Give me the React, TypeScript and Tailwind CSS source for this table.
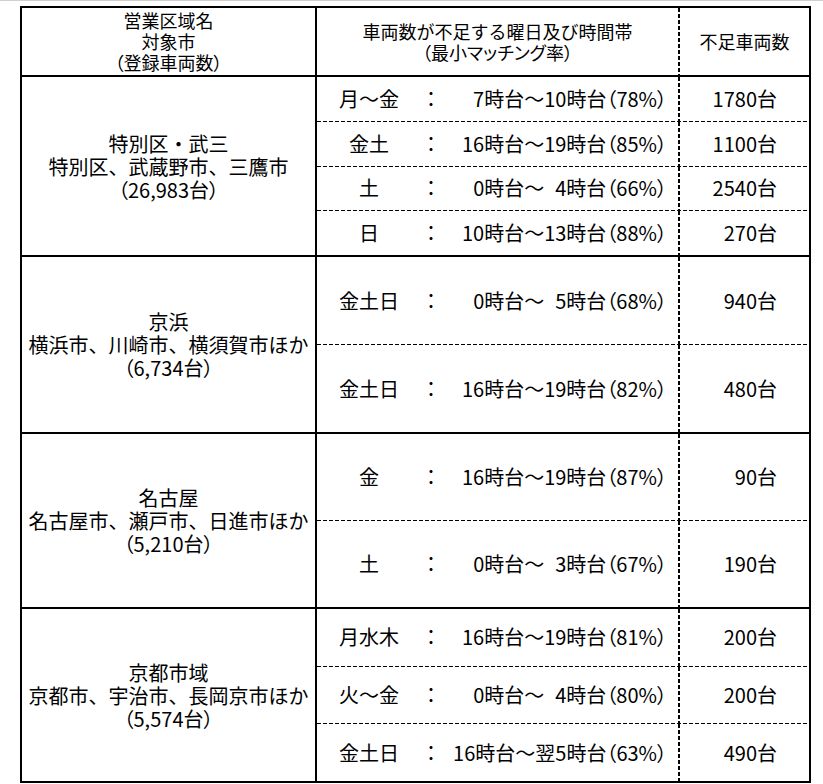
import React from "react";

type Row = { day: string; time: string; n: string };
type Group = { h: string; title: string; cities: string; count: string; rows: Row[] };

const groups: Group[] = [
  {
    h: "h-[180px]",
    title: "特別区・武三",
    cities: "特別区、武蔵野市、三鷹市",
    count: "（26,983台）",
    rows: [
      { day: "月～金", time: "7時台～10時台（78%）", n: "1780台" },
      { day: "金土", time: "16時台～19時台（85%）", n: "1100台" },
      { day: "土", time: "0時台～_4時台（66%）", n: "2540台" },
      { day: "日", time: "10時台～13時台（88%）", n: "270台" },
    ],
  },
  {
    h: "h-[177px]",
    title: "京浜",
    cities: "横浜市、川崎市、横須賀市ほか",
    count: "（6,734台）",
    rows: [
      { day: "金土日", time: "0時台～_5時台（68%）", n: "940台" },
      { day: "金土日", time: "16時台～19時台（82%）", n: "480台" },
    ],
  },
  {
    h: "h-[175px]",
    title: "名古屋",
    cities: "名古屋市、瀬戸市、日進市ほか",
    count: "（5,210台）",
    rows: [
      { day: "金", time: "16時台～19時台（87%）", n: "90台" },
      { day: "土", time: "0時台～_3時台（67%）", n: "190台" },
    ],
  },
  {
    h: "h-[172px]",
    title: "京都市域",
    cities: "京都市、宇治市、長岡京市ほか",
    count: "（5,574台）",
    rows: [
      { day: "月水木", time: "16時台～19時台（81%）", n: "200台" },
      { day: "火～金", time: "0時台～_4時台（80%）", n: "200台" },
      { day: "金土日", time: "16時台～翌5時台（63%）", n: "490台" },
    ],
  },
];

function VDash() {
  return (
    <div className="w-[2px] shrink-0 self-stretch bg-[repeating-linear-gradient(to_bottom,#000_0_4px,transparent_4px_6px)]" />
  );
}

function HDash() {
  return (
    <div className="h-px w-full shrink-0 bg-[repeating-linear-gradient(to_right,#000_0_4px,transparent_4px_6px)]" />
  );
}

function Time({ t }: { t: string }) {
  const parts = t.split("_");
  return (
    <span className="[font-feature-settings:'palt']">
      {parts.map((p, i) => (
        <React.Fragment key={i}>
          {i > 0 && <span className="inline-block w-[11px]" />}
          {p}
        </React.Fragment>
      ))}
    </span>
  );
}

export default function App() {
  return (
    <div className="min-h-[784px] w-full bg-white font-['Noto_Sans_CJK_JP','Noto_Sans_CJK_SC',sans-serif] text-black">
      <div className="h-px w-full bg-[#cfcfcf]" />
      <div className="ml-[20px] mt-[5px] w-[791px] border-2 border-black">
        {/* header */}
        <div className="flex h-[69px] border-b-2 border-black text-[18px] leading-[21px]">
          <div className="flex w-[295px] shrink-0 flex-col items-center justify-center border-r-2 border-black text-center">
            <div>営業区域名</div>
            <div>対象市</div>
            <div className="[font-feature-settings:'palt']">（登録車両数）</div>
          </div>
          <div className="flex w-[361px] shrink-0 flex-col items-center justify-center text-center">
            <div>車両数が不足する曜日及び時間帯</div>
            <div className="[font-feature-settings:'palt']">（最小マッチング率）</div>
          </div>
          <VDash />
          <div className="flex flex-1 items-center justify-center">不足車両数</div>
        </div>
        {groups.map((g, gi) => (
          <div
            key={gi}
            className={`flex ${g.h} ${gi < groups.length - 1 ? "border-b-2 border-black" : ""}`}
          >
            <div className="flex w-[295px] shrink-0 flex-col items-center justify-center border-r-2 border-black text-center text-[20px] leading-[23px]">
              <div>{g.title}</div>
              <div>{g.cities}</div>
              <div className="[font-feature-settings:'palt']">{g.count}</div>
            </div>
            <div className="flex flex-1 flex-col">
              {g.rows.map((r, ri) => (
                <React.Fragment key={ri}>
                  {ri > 0 && <HDash />}
                  <div className="flex flex-1 text-[20px] leading-[24px]">
                    <div className="flex w-[361px] shrink-0 items-center">
                      <div className="w-[104px] shrink-0 text-center">{r.day}</div>
                      <div className="w-[20px] shrink-0 text-center">：</div>
                      <div className="flex-1 pr-[11px] text-right">
                        <Time t={r.time} />
                      </div>
                    </div>
                    <VDash />
                    <div className="flex flex-1 items-center justify-end pr-[32px]">{r.n}</div>
                  </div>
                </React.Fragment>
              ))}
            </div>
          </div>
        ))}
      </div>
    </div>
  );
}
